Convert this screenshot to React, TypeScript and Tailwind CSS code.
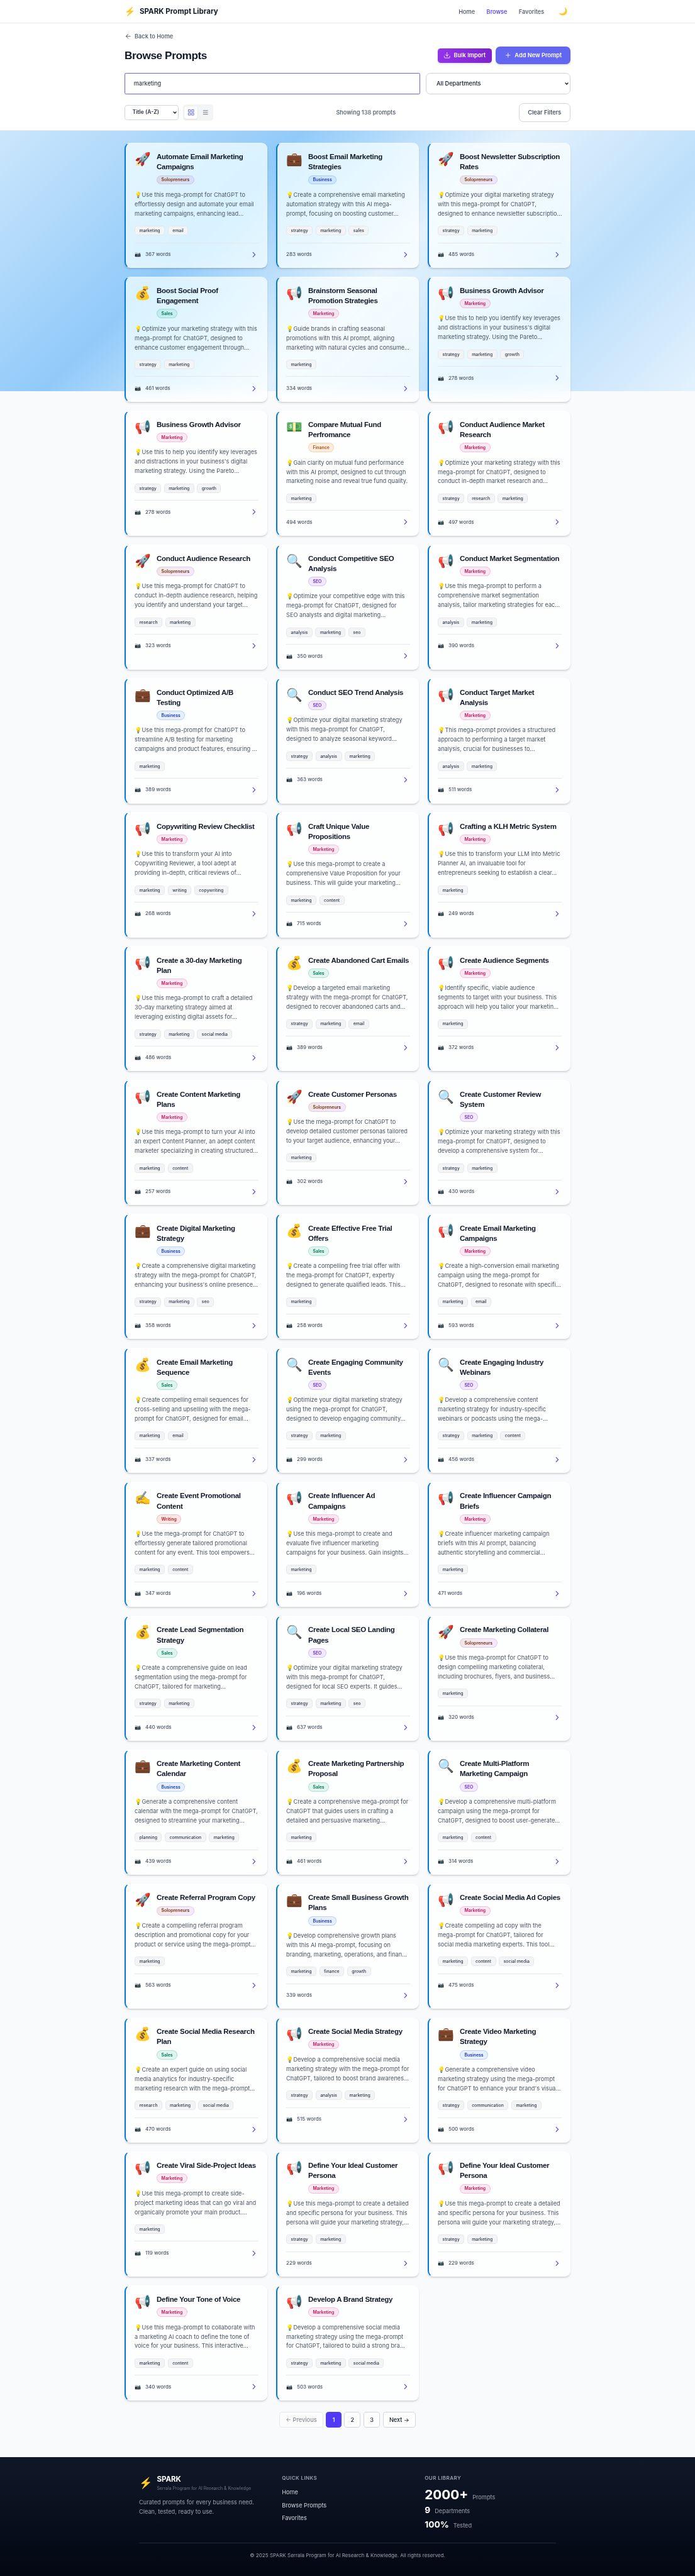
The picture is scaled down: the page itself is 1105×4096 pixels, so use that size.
import { ArrowLeft, ChevronDown, ChevronRight, Download, Plus } from "lucide-react";

type Dept = "Solopreneurs" | "Business" | "Sales" | "Marketing" | "Finance" | "SEO" | "Writing";

type Prompt = {
  title: string;
  dept: Dept;
  text: string;
  tags: string[];
  words: number;
  noCamera?: boolean;
};

const deptIcon: Record<Dept, string> = {
  Solopreneurs: "🚀",
  Business: "💼",
  Sales: "💰",
  Marketing: "📢",
  Finance: "💵",
  SEO: "🔍",
  Writing: "✍️",
};

const deptStyle: Record<Dept, string> = {
  Solopreneurs:
    "bg-gradient-to-r from-[#92400e]/12 to-[#a855f7]/12 border-[#a855f7]/20 text-[#7c2d12]",
  Business: "bg-[#2563eb]/10 border-[#3b82f6]/25 text-[#1e40af]",
  Sales: "bg-[#10b981]/12 border-[#10b981]/25 text-[#047857]",
  Marketing: "bg-[#ec4899]/12 border-[#ec4899]/25 text-[#be185d]",
  Finance: "bg-[#f97316]/12 border-[#f59e0b]/30 text-[#b45309]",
  SEO: "bg-[#9333ea]/10 border-[#8b5cf6]/25 text-[#6d28d9]",
  Writing: "bg-[#ef4444]/12 border-[#ef4444]/25 text-[#b91c1c]",
};

const prompts: Prompt[] = [
  { title: "Automate Email Marketing\nCampaigns", dept: "Solopreneurs", text: "Use this mega-prompt for ChatGPT to\neffortlessly design and automate your email\nmarketing campaigns, enhancing lead…", tags: ["marketing", "email"], words: 367 },
  { title: "Boost Email Marketing\nStrategies", dept: "Business", text: "Create a comprehensive email marketing\nautomation strategy with this AI mega-\nprompt, focusing on boosting customer…", tags: ["strategy", "marketing", "sales"], words: 283, noCamera: true },
  { title: "Boost Newsletter Subscription\nRates", dept: "Solopreneurs", text: "Optimize your digital marketing strategy\nwith this mega-prompt for ChatGPT,\ndesigned to enhance newsletter subscriptio…", tags: ["strategy", "marketing"], words: 485 },
  { title: "Boost Social Proof\nEngagement", dept: "Sales", text: "Optimize your marketing strategy with this\nmega-prompt for ChatGPT, designed to\nenhance customer engagement through…", tags: ["strategy", "marketing"], words: 461 },
  { title: "Brainstorm Seasonal\nPromotion Strategies", dept: "Marketing", text: "Guide brands in crafting seasonal\npromotions with this AI prompt, aligning\nmarketing with natural cycles and consume…", tags: ["marketing"], words: 334, noCamera: true },
  { title: "Business Growth Advisor", dept: "Marketing", text: "Use this to help you identify key leverages\nand distractions in your business's digital\nmarketing strategy. Using the Pareto…", tags: ["strategy", "marketing", "growth"], words: 278 },
  { title: "Business Growth Advisor", dept: "Marketing", text: "Use this to help you identify key leverages\nand distractions in your business's digital\nmarketing strategy. Using the Pareto…", tags: ["strategy", "marketing", "growth"], words: 278 },
  { title: "Compare Mutual Fund\nPerfromance", dept: "Finance", text: "Gain clarity on mutual fund performance\nwith this AI prompt, designed to cut through\nmarketing noise and reveal true fund quality.", tags: ["marketing"], words: 494, noCamera: true },
  { title: "Conduct Audience Market\nResearch", dept: "Marketing", text: "Optimize your marketing strategy with this\nmega-prompt for ChatGPT, designed to\nconduct in-depth market research and…", tags: ["strategy", "research", "marketing"], words: 497 },
  { title: "Conduct Audience Research", dept: "Solopreneurs", text: "Use this mega-prompt for ChatGPT to\nconduct in-depth audience research, helping\nyou identify and understand your target…", tags: ["research", "marketing"], words: 323 },
  { title: "Conduct Competitive SEO\nAnalysis", dept: "SEO", text: "Optimize your competitive edge with this\nmega-prompt for ChatGPT, designed for\nSEO analysts and digital marketing…", tags: ["analysis", "marketing", "seo"], words: 350 },
  { title: "Conduct Market Segmentation", dept: "Marketing", text: "Use this mega-prompt to perform a\ncomprehensive market segmentation\nanalysis, tailor marketing strategies for eac…", tags: ["analysis", "marketing"], words: 390 },
  { title: "Conduct Optimized A/B\nTesting", dept: "Business", text: "Use this mega-prompt for ChatGPT to\nstreamline A/B testing for marketing\ncampaigns and product features, ensuring …", tags: ["marketing"], words: 389 },
  { title: "Conduct SEO Trend Analysis", dept: "SEO", text: "Optimize your digital marketing strategy\nwith this mega-prompt for ChatGPT,\ndesigned to analyze seasonal keyword…", tags: ["strategy", "analysis", "marketing"], words: 363 },
  { title: "Conduct Target Market\nAnalysis", dept: "Marketing", text: "This mega-prompt provides a structured\napproach to performing a target market\nanalysis, crucial for businesses to…", tags: ["analysis", "marketing"], words: 511 },
  { title: "Copywriting Review Checklist", dept: "Marketing", text: "Use this to transform your AI into\nCopywriting Reviewer, a tool adept at\nproviding in-depth, critical reviews of…", tags: ["marketing", "writing", "copywriting"], words: 268 },
  { title: "Craft Unique Value\nPropositions", dept: "Marketing", text: "Use this mega-prompt to create a\ncomprehensive Value Proposition for your\nbusiness. This will guide your marketing…", tags: ["marketing", "content"], words: 715 },
  { title: "Crafting a KLH Metric System", dept: "Marketing", text: "Use this to transform your LLM into Metric\nPlanner AI, an invaluable tool for\nentrepreneurs seeking to establish a clear…", tags: ["marketing"], words: 249 },
  { title: "Create a 30-day Marketing\nPlan", dept: "Marketing", text: "Use this mega-prompt to craft a detailed\n30-day marketing strategy aimed at\nleveraging existing digital assets for…", tags: ["strategy", "marketing", "social media"], words: 486 },
  { title: "Create Abandoned Cart Emails", dept: "Sales", text: "Develop a targeted email marketing\nstrategy with the mega-prompt for ChatGPT,\ndesigned to recover abandoned carts and…", tags: ["strategy", "marketing", "email"], words: 389 },
  { title: "Create Audience Segments", dept: "Marketing", text: "Identify specific, viable audience\nsegments to target with your business. This\napproach will help you tailor your marketin…", tags: ["marketing"], words: 372 },
  { title: "Create Content Marketing\nPlans", dept: "Marketing", text: "Use this mega-prompt to turn your AI into\nan expert Content Planner, an adept content\nmarketer specializing in creating structured…", tags: ["marketing", "content"], words: 257 },
  { title: "Create Customer Personas", dept: "Solopreneurs", text: "Use the mega-prompt for ChatGPT to\ndevelop detailed customer personas tailored\nto your target audience, enhancing your…", tags: ["marketing"], words: 302 },
  { title: "Create Customer Review\nSystem", dept: "SEO", text: "Optimize your marketing strategy with this\nmega-prompt for ChatGPT, designed to\ndevelop a comprehensive system for…", tags: ["strategy", "marketing"], words: 430 },
  { title: "Create Digital Marketing\nStrategy", dept: "Business", text: "Create a comprehensive digital marketing\nstrategy with the mega-prompt for ChatGPT,\nenhancing your business's online presence…", tags: ["strategy", "marketing", "seo"], words: 358 },
  { title: "Create Effective Free Trial\nOffers", dept: "Sales", text: "Create a compelling free trial offer with\nthe mega-prompt for ChatGPT, expertly\ndesigned to generate qualified leads. This…", tags: ["marketing"], words: 258 },
  { title: "Create Email Marketing\nCampaigns", dept: "Marketing", text: "Create a high-conversion email marketing\ncampaign using the mega-prompt for\nChatGPT, designed to resonate with specifi…", tags: ["marketing", "email"], words: 593 },
  { title: "Create Email Marketing\nSequence", dept: "Sales", text: "Create compelling email sequences for\ncross-selling and upselling with the mega-\nprompt for ChatGPT, designed for email…", tags: ["marketing", "email"], words: 337 },
  { title: "Create Engaging Community\nEvents", dept: "SEO", text: "Optimize your digital marketing strategy\nusing the mega-prompt for ChatGPT,\ndesigned to develop engaging community…", tags: ["strategy", "marketing"], words: 299 },
  { title: "Create Engaging Industry\nWebinars", dept: "SEO", text: "Develop a comprehensive content\nmarketing strategy for industry-specific\nwebinars or podcasts using the mega-…", tags: ["strategy", "marketing", "content"], words: 456 },
  { title: "Create Event Promotional\nContent", dept: "Writing", text: "Use the mega-prompt for ChatGPT to\neffortlessly generate tailored promotional\ncontent for any event. This tool empowers…", tags: ["marketing", "content"], words: 347 },
  { title: "Create Influencer Ad\nCampaigns", dept: "Marketing", text: "Use this mega-prompt to create and\nevaluate five influencer marketing\ncampaigns for your business. Gain insights…", tags: ["marketing"], words: 196 },
  { title: "Create Influencer Campaign\nBriefs", dept: "Marketing", text: "Create influencer marketing campaign\nbriefs with this AI prompt, balancing\nauthentic storytelling and commercial…", tags: ["marketing"], words: 471, noCamera: true },
  { title: "Create Lead Segmentation\nStrategy", dept: "Sales", text: "Create a comprehensive guide on lead\nsegmentation using the mega-prompt for\nChatGPT, tailored for marketing…", tags: ["strategy", "marketing"], words: 440 },
  { title: "Create Local SEO Landing\nPages", dept: "SEO", text: "Optimize your digital marketing strategy\nwith this mega-prompt for ChatGPT,\ndesigned for local SEO experts. It guides…", tags: ["strategy", "marketing", "seo"], words: 637 },
  { title: "Create Marketing Collateral", dept: "Solopreneurs", text: "Use this mega-prompt for ChatGPT to\ndesign compelling marketing collateral,\nincluding brochures, flyers, and business…", tags: ["marketing"], words: 320 },
  { title: "Create Marketing Content\nCalendar", dept: "Business", text: "Generate a comprehensive content\ncalendar with the mega-prompt for ChatGPT,\ndesigned to streamline your marketing…", tags: ["planning", "communication", "marketing"], words: 439 },
  { title: "Create Marketing Partnership\nProposal", dept: "Sales", text: "Create a comprehensive mega-prompt for\nChatGPT that guides users in crafting a\ndetailed and persuasive marketing…", tags: ["marketing"], words: 461 },
  { title: "Create Multi-Platform\nMarketing Campaign", dept: "SEO", text: "Develop a comprehensive multi-platform\ncampaign using the mega-prompt for\nChatGPT, designed to boost user-generate…", tags: ["marketing", "content"], words: 314 },
  { title: "Create Referral Program Copy", dept: "Solopreneurs", text: "Create a compelling referral program\ndescription and promotional copy for your\nproduct or service using the mega-prompt…", tags: ["marketing"], words: 563 },
  { title: "Create Small Business Growth\nPlans", dept: "Business", text: "Develop comprehensive growth plans\nwith this AI mega-prompt, focusing on\nbranding, marketing, operations, and finan…", tags: ["marketing", "finance", "growth"], words: 339, noCamera: true },
  { title: "Create Social Media Ad Copies", dept: "Marketing", text: "Create compelling ad copy with the\nmega-prompt for ChatGPT, tailored for\nsocial media marketing experts. This tool…", tags: ["marketing", "content", "social media"], words: 475 },
  { title: "Create Social Media Research\nPlan", dept: "Sales", text: "Create an expert guide on using social\nmedia analytics for industry-specific\nmarketing research with the mega-prompt…", tags: ["research", "marketing", "social media"], words: 470 },
  { title: "Create Social Media Strategy", dept: "Marketing", text: "Develop a comprehensive social media\nmarketing strategy with the mega-prompt for\nChatGPT, tailored to boost brand awarenes…", tags: ["strategy", "analysis", "marketing"], words: 515 },
  { title: "Create Video Marketing\nStrategy", dept: "Business", text: "Generate a comprehensive video\nmarketing strategy using the mega-prompt\nfor ChatGPT to enhance your brand's visua…", tags: ["strategy", "communication", "marketing"], words: 500 },
  { title: "Create Viral Side-Project Ideas", dept: "Marketing", text: "Use this mega-prompt to create side-\nproject marketing ideas that can go viral and\norganically promote your main product.…", tags: ["marketing"], words: 119 },
  { title: "Define Your Ideal Customer\nPersona", dept: "Marketing", text: "Use this mega-prompt to create a detailed\nand specific persona for your business. This\npersona will guide your marketing strategy,…", tags: ["strategy", "marketing"], words: 229, noCamera: true },
  { title: "Define Your Ideal Customer\nPersona", dept: "Marketing", text: "Use this mega-prompt to create a detailed\nand specific persona for your business. This\npersona will guide your marketing strategy,…", tags: ["strategy", "marketing"], words: 229 },
  { title: "Define Your Tone of Voice", dept: "Marketing", text: "Use this mega-prompt to collaborate with\na marketing AI coach to define the tone of\nvoice for your business. This interactive…", tags: ["marketing", "content"], words: 340 },
  { title: "Develop A Brand Strategy", dept: "Marketing", text: "Develop a comprehensive social media\nmarketing strategy using the mega-prompt\nfor ChatGPT, tailored to build a strong bra…", tags: ["strategy", "marketing", "social media"], words: 503 },
];

function Header() {
  return (
    <header className="h-[65px] border-b border-gray-200 bg-white">
      <div className="mx-auto flex h-16 w-[1280px] items-center justify-between px-6">
        <div className="flex items-center gap-3">
          <span className="text-2xl leading-8">⚡</span>
          <span className="text-xl font-bold text-gray-900">SPARK Prompt Library</span>
        </div>
        <nav className="flex items-center gap-8 font-medium text-gray-600">
          <a>Home</a>
          <a className="text-indigo-600">Browse</a>
          <a>Favorites</a>
          <button className="p-2 text-xl leading-7">🌙</button>
        </nav>
      </div>
    </header>
  );
}

function Toolbar() {
  return (
    <section className="h-[297px] border-b border-gray-200 bg-white">
      <div className="mx-auto w-[1280px] px-6 py-6">
        <a className="flex items-center gap-2 font-medium text-gray-600">
          <ArrowLeft size={20} />
          Back to Home
        </a>

        <div className="mt-4 flex h-12 items-center justify-between">
          <h1 className="font-['Liberation_Sans',sans-serif] text-3xl font-bold tracking-tight text-gray-900">
            Browse Prompts
          </h1>
          <div className="flex items-center gap-3">
            <button className="flex h-10 items-center gap-2 rounded-lg bg-gradient-to-r from-[#9333ea] to-[#7e22ce] px-4 font-semibold text-white shadow-md">
              <Download size={20} strokeWidth={1.75} />
              Bulk Import
            </button>
            <button className="flex h-12 items-center gap-2 rounded-xl bg-[#6366f1] px-6 font-semibold text-white shadow-md">
              <Plus size={20} strokeWidth={1.75} />
              Add New Prompt
            </button>
          </div>
        </div>

        <div className="mt-6 flex gap-4">
          <input
            className="h-[60px] w-[816px] rounded border-2 border-[#6366f1] bg-white px-6 text-gray-900"
            defaultValue="marketing"
          />
          <button className="flex h-[60px] w-[400px] items-center justify-between rounded-xl border-2 border-gray-300 bg-white pr-[2px] pl-7 font-medium text-gray-900">
            All Departments
            <ChevronDown size={14} strokeWidth={4} />
          </button>
        </div>

        <div className="mt-6 flex h-[52px] items-center justify-between">
          <div className="flex items-center gap-3">
            <button className="flex h-[42px] w-[149px] items-center justify-between rounded-lg border-2 border-gray-300 bg-white pr-[2px] pl-5 text-[15.2px] font-medium text-gray-900">
              Title (A-Z)
              <ChevronDown size={14} strokeWidth={4} />
            </button>
            <div className="flex gap-1 rounded-lg bg-gray-100 p-1">
              <button className="flex size-9 items-center justify-center rounded-md bg-white text-[#6366f1] shadow-sm">
                <svg className="size-5" viewBox="0 0 24 24" fill="none" stroke="currentColor" strokeWidth="2" strokeLinejoin="round">
                  <rect x="3" y="3" width="7" height="7" />
                  <rect x="14" y="3" width="7" height="7" />
                  <rect x="14" y="14" width="7" height="7" />
                  <rect x="3" y="14" width="7" height="7" />
                </svg>
              </button>
              <button className="flex size-9 items-center justify-center rounded-md text-gray-500">
                <svg className="size-5" viewBox="0 0 24 24" fill="none" stroke="currentColor" strokeWidth="2">
                  <path d="M4 6h16M4 12h16M4 18h16" />
                </svg>
              </button>
            </div>
          </div>
          <span className="font-medium text-gray-600">Showing 138 prompts</span>
          <button className="h-[52px] rounded-xl border-2 border-gray-300 bg-white px-6 font-medium text-gray-700">
            Clear Filters
          </button>
        </div>
      </div>
    </section>
  );
}

function Card({ p }: { p: Prompt }) {
  return (
    <article className="rounded-2xl border border-l-4 border-white/30 border-l-[#0078d4] bg-white/72 py-[23.26px] pr-[23.26px] pl-[24.5px] shadow-md backdrop-blur-[20px] backdrop-saturate-[160%]">
      <div className="flex items-start gap-4">
        <span className="text-4xl leading-10">{deptIcon[p.dept]}</span>
        <div>
          <h3 className="whitespace-pre font-['Liberation_Sans',sans-serif] text-xl leading-7 font-bold tracking-tight text-gray-900">
            {p.title}
          </h3>
          <span
            className={`mt-[9px] flex h-[26px] w-fit items-center rounded-full border px-[11.26px] text-xs font-semibold ${deptStyle[p.dept]}`}
          >
            {p.dept}
          </span>
        </div>
      </div>
      <p className="mt-4 whitespace-pre leading-[26px] text-gray-600">{"💡" + p.text}</p>
      <div className="mt-5 flex gap-2">
        {p.tags.map((t) => (
          <span
            key={t}
            className="flex h-[26px] items-center rounded-lg border border-gray-200 bg-gray-100 px-[11.26px] text-xs font-medium text-gray-700"
          >
            {t}
          </span>
        ))}
      </div>
      <div className="mt-5 flex items-center justify-between border-t border-gray-200 pt-[19.26px]">
        <div className="flex h-6 items-center gap-3 text-sm font-medium text-gray-600">
          {!p.noCamera && <span>📷</span>}
          <span>{p.words} words</span>
        </div>
        <ChevronRight size={24} className="text-indigo-600" />
      </div>
    </article>
  );
}

function Pagination() {
  return (
    <div className="mt-8 flex h-11 justify-center gap-2 font-medium text-gray-900">
      <button className="rounded-lg border-2 border-gray-300 bg-white px-4 opacity-50">← Previous</button>
      <button className="rounded-lg border-2 border-indigo-600 bg-indigo-600 px-4 text-white">1</button>
      <button className="rounded-lg border-2 border-gray-300 bg-white px-4">2</button>
      <button className="rounded-lg border-2 border-gray-300 bg-white px-4">3</button>
      <button className="rounded-lg border-2 border-gray-300 bg-white px-4">Next →</button>
    </div>
  );
}

function Footer() {
  return (
    <footer className="mt-20 h-[330px] bg-gradient-to-b from-gray-900 to-gray-950 pt-12">
      <div className="mx-auto w-[1152px]">
        <div className="grid h-[189px] grid-cols-3 gap-8">
          <div>
            <div className="flex items-center gap-3">
              <span className="text-3xl">⚡</span>
              <div>
                <div className="text-xl leading-[30px] font-bold text-white">SPARK</div>
                <div className="text-xs leading-5 text-gray-500">Serrala Program for AI Research &amp; Knowledge</div>
              </div>
            </div>
            <p className="mt-4 leading-[26px] text-gray-400">
              Curated prompts for every business need.
              <br />
              Clean, tested, ready to use.
            </p>
          </div>
          <div>
            <h4 className="text-sm leading-[22px] font-semibold tracking-wider text-gray-400 uppercase">Quick Links</h4>
            <ul className="mt-4 flex flex-col gap-3 text-gray-300">
              <li>Home</li>
              <li>Browse Prompts</li>
              <li>Favorites</li>
            </ul>
          </div>
          <div>
            <h4 className="text-sm leading-[22px] font-semibold tracking-wider text-gray-400 uppercase">Our Library</h4>
            <div className="mt-4 flex flex-col gap-2 text-gray-400">
              <div className="flex h-[38px] items-baseline gap-3">
                <span className="text-4xl leading-[38px] font-bold text-white">2000+</span>
                <span>Prompts</span>
              </div>
              <div className="flex h-8 items-baseline gap-3">
                <span className="text-2xl font-bold text-white">9</span>
                <span>Departments</span>
              </div>
              <div className="flex h-8 items-baseline gap-3">
                <span className="text-2xl font-bold text-white">100%</span>
                <span>Tested</span>
              </div>
            </div>
          </div>
        </div>
        <div className="border-t border-gray-800 pt-6 text-center text-sm text-gray-400">
          © 2025 SPARK Serrala Program for AI Research &amp; Knowledge. All rights reserved.
        </div>
      </div>
    </footer>
  );
}

export default function App() {
  return (
    <div className="relative h-[7117px] w-[1920px] overflow-hidden bg-gray-50 font-['Inter','Noto_Color_Emoji',sans-serif] text-base [zoom:0.5755208]">
      <div className="absolute inset-x-0 top-0 h-[1080px] bg-[linear-gradient(135deg,#e3f2fd_0%,#bbdefb_20%,#90caf9_40%,#e3f2fd_60%,#bbdefb_80%,#e3f2fd_100%)]" />
      <div className="relative">
        <Header />
        <Toolbar />
        <main className="mx-auto w-[1280px] px-6 pt-8">
          <div className="grid auto-rows-[318px] grid-cols-3 grid-rows-[repeat(16,346px)] gap-6">
            {prompts.map((p, i) => (
              <Card key={i} p={p} />
            ))}
          </div>
          <Pagination />
        </main>
        <Footer />
      </div>
    </div>
  );
}
